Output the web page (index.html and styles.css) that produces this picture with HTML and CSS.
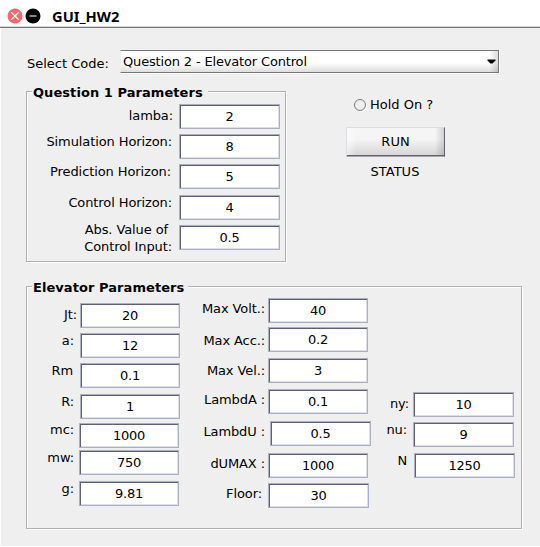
FILE: index.html
```html
<!DOCTYPE html>
<html lang="en">
<head>
<meta charset="utf-8">
<title>GUI_HW2</title>
<link rel="stylesheet" href="styles.css">
</head>
<body>
<div class="window">
  <header class="titlebar">
    <svg class="controls" width="36" height="16" viewBox="0 0 36 16">
      <circle cx="8" cy="8" r="7.5" fill="#fb6668"/>
      <path d="M4.3 4.3l7.4 7.4M11.7 4.3l-7.4 7.4" stroke="#fff" stroke-width="1.3"/>
      <circle cx="26" cy="8" r="7.5" fill="#000"/>
      <path d="M22.5 8h7" stroke="#ccc" stroke-width="1.3"/>
    </svg>
    <h1>GUI_HW2</h1>
  </header>
  <main>
    <div class="select-row">
      <span class="select-label">Select Code:</span>
      <div class="select">
        <span>Question 2 - Elevator Control</span>
        <svg width="9" height="5" viewBox="0 0 9 5"><path d="M0.5 0.5h8v1L5.5 4.5h-2L0.5 1.5z"/></svg>
      </div>
    </div>
    <div class="upper">
      <section class="panel question">
        <h2>Question 1 Parameters</h2>
        <div class="fields">
          <div class="row lamba"><label>lamba:</label><div class="input">2</div></div>
          <div class="row simulation"><label>Simulation Horizon:</label><div class="input">8</div></div>
          <div class="row prediction"><label>Prediction Horizon:</label><div class="input">5</div></div>
          <div class="row control"><label>Control Horizon:</label><div class="input">4</div></div>
          <div class="row absolute"><label>Abs. Value of&nbsp;<br>Control Input:</label><div class="input">0.5</div></div>
        </div>
      </section>
      <section class="actions">
        <div class="radio"><i></i><span>Hold On ?</span></div>
        <div class="button">RUN</div>
        <div class="status">STATUS</div>
      </section>
    </div>
    <section class="panel elevator">
      <h2>Elevator Parameters</h2>
      <div class="columns">
        <div class="fields col-motor">
          <div class="row jt"><label>Jt:</label><div class="input">20</div></div>
          <div class="row a"><label>a:</label><div class="input">12</div></div>
          <div class="row rm"><label>Rm</label><div class="input">0.1</div></div>
          <div class="row r"><label>R:</label><div class="input">1</div></div>
          <div class="row mc"><label>mc:</label><div class="input">1000</div></div>
          <div class="row mw"><label>mw:</label><div class="input">750</div></div>
          <div class="row g"><label>g:</label><div class="input">9.81</div></div>
        </div>
        <div class="fields col-limits">
          <div class="row volt"><label>Max Volt.:</label><div class="input">40</div></div>
          <div class="row acc"><label>Max Acc.:</label><div class="input">0.2</div></div>
          <div class="row vel"><label>Max Vel.:</label><div class="input">3</div></div>
          <div class="row lambda-a"><label>LambdA :</label><div class="input">0.1</div></div>
          <div class="row lambda-u"><label>LambdU :</label><div class="input">0.5</div></div>
          <div class="row dumax"><label>dUMAX :</label><div class="input">1000</div></div>
          <div class="row floor"><label>Floor:</label><div class="input">30</div></div>
        </div>
        <div class="fields col-horizon">
          <div class="row ny"><label>ny:</label><div class="input">10</div></div>
          <div class="row nu"><label>nu:</label><div class="input">9</div></div>
          <div class="row n"><label>N</label><div class="input">1250</div></div>
        </div>
      </div>
    </section>
  </main>
</div>
</body>
</html>
```
FILE: styles.css
```css
* { box-sizing: border-box; }
body {
  margin: 0;
  background: #fff;
  color: #000;
  font: 13px/15px "DejaVu Sans", sans-serif;
}
.window { width: 540px; height: 547px; overflow: hidden; }

.titlebar {
  display: flex;
  align-items: center;
  height: 28px;
  padding: 5px 0 0 7px;
  border-bottom: 1px solid #747474;
  box-shadow: inset 0 -1px #d8d8d8;
}
.titlebar h1 {
  margin: 0 0 0 9px;
  font: bold 14.7px/20px "Noto Sans", sans-serif;
}

main {
  height: 518px;
  margin: 0 0 1px 1px;
  padding: 22px 0 0 25px;
  background: #efefef;
}
.select-row { display: flex; }
.select-label { width: 94px; padding: 6px 0 0 1px; }
.select {
  display: flex;
  justify-content: space-between;
  align-items: center;
  width: 379px;
  height: 23px;
  padding: 0 2px 1px 2px;
  border: 1px solid #777;
  border-left-color: #eee;
  background: linear-gradient(to left, #00000025, #0000 9px), linear-gradient(#fff 55%, #dedede);
  box-shadow: 1px 1px #fff;
  letter-spacing: -0.16px;
}

.panel {
  border: 1px solid #b0b0b0;
  box-shadow: 1px 1px #fff, inset 1px 1px #fff;
}
.panel h2 {
  height: 15px;
  margin: -7px 0 0 5px;
  padding-left: 1px;
  background: #efefef;
  font: bold 13px/15px "DejaVu Sans", sans-serif;
  letter-spacing: 0.06px;
  white-space: nowrap;
}
.upper { display: flex; height: 171px; margin-top: 18px; }
.question { width: 260px; }
.question h2 { width: 176px; }
.elevator { width: 496px; height: 243px; margin-top: 24px; }
.elevator h2 { width: 156px; }

.row {
  display: flex;
  align-items: flex-start;
  height: 25px;
  margin-top: var(--above, 5px);
}
.row label {
  flex: 1;
  margin: var(--drop, 0) var(--gap, 6px) 0 0;
  text-align: right;
  letter-spacing: -0.1px;
  white-space: nowrap;
}
.input {
  flex: none;
  width: 101px;
  height: 25px;
  border: 1px solid #acafc3;
  box-shadow: inset 1px 1px #5f6171, inset -1px -1px #dcdee8;
  background: #fff;
  line-height: 23px;
  letter-spacing: -0.25px;
  text-align: center;
}

.question .fields { width: 253px; }
.lamba { --above: 4px; --drop: 4px; --gap: 6px; }
.simulation { --gap: 7px; }
.prediction { --gap: 8px; }
.control { --above: 6px; --gap: 7px; }
.absolute { --drop: -4px; --gap: 7px; line-height: 17px; }

.columns { display: flex; }
.col-motor { width: 153px; }
.col-motor .input, .col-limits .input { width: 100px; }
.jt { --above: 8px; --drop: 4px; --gap: 3px; }
.rm { --gap: 7px; }
.r { --above: 6px; }
.mc { --above: 4px; --drop: -1px; --gap: 5px; }
.mw { --above: 2px; --gap: 5px; }
.g { --above: 6px; --gap: 5px; }
.mc, .mw, .g { margin-right: 1px; }

.col-limits { width: 191px; }
.col-limits .row { margin-right: 3px; }
.volt { --above: 3px; --drop: 3px; --gap: 3px; }
.acc { --above: 4px; --drop: 6px; --gap: 3px; }
.vel { --above: 6px; --drop: 5px; --gap: 3px; }
.lambda-a { --above: 6px; --drop: 3px; --gap: 3px; }
.lambda-u { --above: 7px; --drop: 3px; --gap: 5px; }
.dumax { --above: 7px; --drop: 3px; --gap: 3px; }
.floor { --drop: 3px; --gap: 6px; }
.col-limits .lambda-u { margin-right: 0; }
.col-limits .floor { margin-right: 2px; }
.col-limits .lambda-u .input, .col-limits .floor .input { width: 101px; }

.col-horizon { width: 144px; }
.col-horizon .row { margin-right: 1px; }
.ny { --above: 97px; --drop: 4px; --gap: 4px; }
.nu { --gap: 6px; }
.n { --above: 6px; --gap: 7px; }
.col-horizon .n { margin-right: 0; }

.actions { padding: 6px 0 0 60px; }
.radio { display: flex; align-items: center; gap: 4px; padding-left: 8px; }
.radio i {
  width: 12px;
  height: 12px;
  border: 1px solid #777;
  border-radius: 50%;
  box-shadow: 1px 1px #fff;
}
.button {
  width: 99px;
  height: 30px;
  margin-top: 15px;
  border: 1px solid #dcdce4;
  border-right-color: #62626c;
  border-bottom-color: #a8a8b4;
  box-shadow: inset 0 -1px #62626c;
  background: linear-gradient(to left, #00000026, #0000 9px), linear-gradient(to right, #fff8, #fff0 9px), linear-gradient(#f5f5f5 40%, #d4d4d4);
  line-height: 28px;
  text-align: center;
}
.status { width: 98px; margin-top: 7px; text-align: center; }
```
